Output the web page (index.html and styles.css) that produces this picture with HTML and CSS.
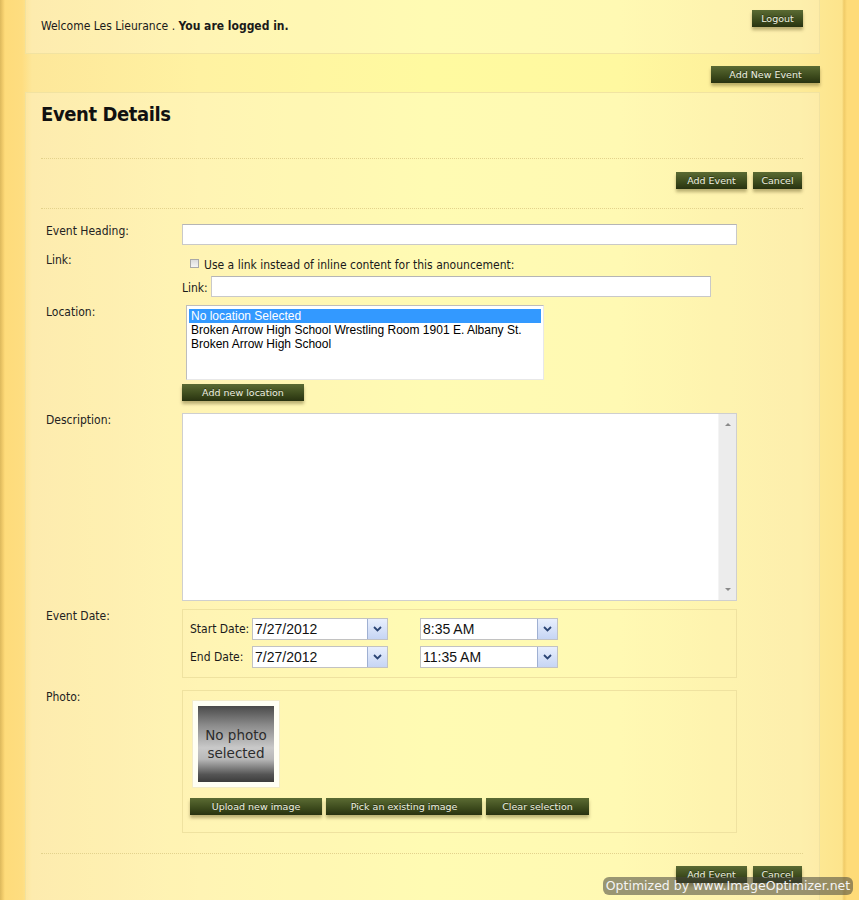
FILE: index.html
```html
<!DOCTYPE html>
<html lang="en">
<head>
    <meta charset="UTF-8">
    <title>Event Details</title>
    <link rel="stylesheet" href="styles.css">
</head>
<body>
    <div class="page">
        <div class="panel top-bar">
            <p class="welcome">Welcome Les Lieurance . <b>You are logged in.</b></p>
            <a class="btn btn-logout" href="#">Logout</a>
        </div>

        <div class="toolbar">
            <a class="btn btn-new" href="#">Add New Event</a>
        </div>

        <div class="panel main">
            <h1>Event Details</h1>

            <div class="actions">
                <a class="btn btn-add" href="#">Add Event</a>
                <a class="btn btn-cancel" href="#">Cancel</a>
            </div>

            <div class="form">
                <div class="row">
                    <div class="label">Event Heading:</div>
                    <div class="field"><input class="text wide" type="text"></div>
                </div>

                <div class="row">
                    <div class="label">Link:</div>
                    <div class="field">
                        <div class="check-line">
                            <input class="check" type="checkbox">
                            <span>Use a link instead of inline content for this anouncement:</span>
                        </div>
                        <div class="link-line">
                            <span class="link-label">Link:</span>
                            <input class="text link" type="text">
                        </div>
                    </div>
                </div>

                <div class="row loose">
                    <div class="label">Location:</div>
                    <div class="field">
                        <ul class="listbox">
                            <li class="selected">No location Selected</li>
                            <li>Broken Arrow High School Wrestling Room 1901 E. Albany St.</li>
                            <li>Broken Arrow High School</li>
                        </ul>
                        <a class="btn btn-location" href="#">Add new location</a>
                    </div>
                </div>

                <div class="row">
                    <div class="label">Description:</div>
                    <div class="field">
                        <div class="desc">
                            <textarea></textarea>
                            <div class="scroll">
                                <span class="arrow up"></span>
                                <span class="arrow down"></span>
                            </div>
                        </div>
                    </div>
                </div>

                <div class="row loose">
                    <div class="label">Event Date:</div>
                    <div class="field">
                        <div class="date-box">
                            <div class="date-row">
                                <span class="date-label">Start Date:</span>
                                <div class="combo"><span class="value">7/27/2012</span><span class="combo-btn"><svg width="9" height="6" viewBox="0 0 9 6"><path d="M1 1 L4.5 4.5 L8 1" fill="none" stroke="#2b4575" stroke-width="1.8"/></svg></span></div>
                                <div class="combo time"><span class="value">8:35 AM</span><span class="combo-btn"><svg width="9" height="6" viewBox="0 0 9 6"><path d="M1 1 L4.5 4.5 L8 1" fill="none" stroke="#2b4575" stroke-width="1.8"/></svg></span></div>
                            </div>
                            <div class="date-row">
                                <span class="date-label">End Date:</span>
                                <div class="combo"><span class="value">7/27/2012</span><span class="combo-btn"><svg width="9" height="6" viewBox="0 0 9 6"><path d="M1 1 L4.5 4.5 L8 1" fill="none" stroke="#2b4575" stroke-width="1.8"/></svg></span></div>
                                <div class="combo time"><span class="value">11:35 AM</span><span class="combo-btn"><svg width="9" height="6" viewBox="0 0 9 6"><path d="M1 1 L4.5 4.5 L8 1" fill="none" stroke="#2b4575" stroke-width="1.8"/></svg></span></div>
                            </div>
                        </div>
                    </div>
                </div>

                <div class="row">
                    <div class="label">Photo:</div>
                    <div class="field">
                        <div class="photo-box">
                            <div class="thumb">
                                <div class="no-photo">No photo<br>selected</div>
                            </div>
                            <div class="photo-actions">
                                <a class="btn btn-upload" href="#">Upload new image</a>
                                <a class="btn btn-pick" href="#">Pick an existing image</a>
                                <a class="btn btn-clear" href="#">Clear selection</a>
                            </div>
                        </div>
                    </div>
                </div>
            </div>

            <div class="actions bottom">
                <a class="btn btn-add" href="#">Add Event</a>
                <a class="btn btn-cancel" href="#">Cancel</a>
            </div>
        </div>
    </div>

    <div class="watermark">Optimized by www.ImageOptimizer.net</div>
</body>
</html>
```

FILE: styles.css
```css
body {
    margin: 0;
    min-height: 900px;
    position: relative;
    font-family: "DejaVu Sans Condensed", "DejaVu Sans", sans-serif;
    font-stretch: condensed;
    font-size: 12px;
    color: #1a1a1a;
    background: linear-gradient(to right, #dcb85c 0, #f3cd6c 3px, #fedb7a 5px, #fedd80 22px, #fde79a 32px, #fff2a2 200px, #fffaa0 430px, #fff8a0 620px, #fdeb98 800px, #fde48c 842px, #f0cb68 844px, #fedb78 847px, #fedb78 859px);
}
.page {
    margin-left: 25px;
    width: 795px;
}
.panel {
    background-color: rgba(255, 255, 255, 0.2);
    border: 1px solid rgba(240, 225, 160, 0.9);
    border-top: 0;
}
.top-bar {
    box-sizing: border-box;
    height: 54px;
    padding: 0 16px 0 15px;
    display: flex;
    justify-content: space-between;
    align-items: flex-start;
}
.welcome {
    margin: 0;
    padding-top: 19px;
    line-height: 15px;
}
.btn {
    display: inline-block;
    box-sizing: border-box;
    height: 17px;
    line-height: 17px;
    text-align: center;
    font-family: "DejaVu Sans", sans-serif;
    font-stretch: normal;
    font-size: 9.5px;
    color: #eef0e0;
    text-decoration: none;
    background: linear-gradient(#5b6b33, #3c4a1c 60%, #283210);
    box-shadow: 0 3px 3px rgba(60, 50, 0, 0.35);
    text-shadow: 0 -1px 0 rgba(0, 0, 0, 0.4);
}
.btn-logout {
    width: 51px;
    margin-top: 10px;
}
.toolbar {
    height: 38px;
    padding-top: 12px;
    box-sizing: border-box;
    text-align: right;
}
.btn-new {
    width: 109px;
}
.main {
    border-top: 1px solid rgba(240, 225, 160, 0.9);
    padding: 0 16px 60px 15px;
}
.main h1 {
    margin: 0;
    padding: 9px 0 32px;
    font-size: 20px;
    line-height: 24px;
    font-weight: bold;
    letter-spacing: -0.4px;
    color: #111;
    border-bottom: 1px dotted #e3d28c;
}
.actions {
    display: flex;
    justify-content: flex-end;
    gap: 6px;
    padding: 13px 1px 19px 0;
    border-bottom: 1px dotted #e3d28c;
}
.actions.bottom {
    border-bottom: 0;
    padding-top: 12px;
}
.btn-add {
    width: 71px;
}
.btn-cancel {
    width: 49px;
}
.form {
    padding: 15px 0 20px 5px;
    border-bottom: 1px dotted #e3d28c;
}
.row {
    display: flex;
    margin-bottom: 8px;
}
.row:last-child {
    margin-bottom: 0;
}
.row.loose {
    margin-bottom: 12px;
}
.label {
    width: 136px;
    flex-shrink: 0;
    line-height: 15px;
    color: #222;
}
.field {
    width: 555px;
}
.text {
    box-sizing: border-box;
    height: 21px;
    margin: 0;
    border: 1px solid #c9c9c9;
    border-top-color: #b5b5b5;
    background: #fff;
    font-family: "Liberation Sans", Arial, sans-serif;
}
.text.wide {
    display: block;
    width: 555px;
}
.check-line {
    height: 23px;
    display: flex;
    align-items: center;
    padding-left: 8px;
    padding-top: 1px;
    box-sizing: border-box;
}
.check {
    appearance: none;
    width: 9px;
    height: 9px;
    margin: 0 5px 4px 0;
    border: 1px solid #a8a8a8;
    background: linear-gradient(#dcdcdc, #f4f4f4);
}
.check-line span {
    line-height: 15px;
}
.link-line {
    display: flex;
    align-items: center;
}
.link-label {
    width: 29px;
    padding-top: 2px;
}
.text.link {
    width: 500px;
}
.listbox {
    list-style: none;
    margin: 0 0 0 4px;
    padding: 3px 2px;
    box-sizing: border-box;
    width: 358px;
    height: 75px;
    background: #fff;
    border: 1px solid #bdbdbd;
    border-right-color: #e8e8e8;
    border-bottom-color: #e8e8e8;
    font-family: "Liberation Sans", Arial, sans-serif;
    font-stretch: normal;
    font-size: 12px;
    color: #000;
}
.listbox li {
    line-height: 14px;
    padding-left: 2px;
}
.listbox li.selected {
    background: #3399ff;
    color: #fff;
}
.btn-location {
    width: 122px;
    margin-top: 4px;
}
.desc {
    display: flex;
    box-sizing: border-box;
    width: 555px;
    height: 188px;
    border: 1px solid #cfcfcf;
    background: #fff;
}
.desc textarea {
    flex: 1;
    border: 0;
    margin: 0;
    resize: none;
    outline: none;
    background: #fff;
}
.scroll {
    width: 17px;
    background: #ececec;
    border-left: 1px solid #f4f4f4;
    position: relative;
}
.arrow {
    position: absolute;
    left: 6px;
    width: 0;
    height: 0;
    border-left: 3px solid transparent;
    border-right: 3px solid transparent;
}
.arrow.up {
    top: 9px;
    border-bottom: 3px solid #8a8a8a;
}
.arrow.down {
    bottom: 9px;
    border-top: 3px solid #8a8a8a;
}
.date-box {
    box-sizing: border-box;
    width: 555px;
    height: 69px;
    padding: 8px 7px 0;
    border: 1px solid #efe2a0;
}
.date-row {
    display: flex;
    align-items: center;
    margin-bottom: 6px;
}
.date-label {
    width: 62px;
}
.combo {
    box-sizing: border-box;
    display: flex;
    width: 136px;
    height: 22px;
    border: 1px solid #c2c2c2;
    background: #fff;
    font-family: "Liberation Sans", Arial, sans-serif;
    font-stretch: normal;
    font-size: 14px;
    color: #111;
}
.combo.time {
    width: 138px;
    margin-left: 32px;
}
.combo .value {
    flex: 1;
    line-height: 20px;
    padding-left: 2px;
}
.combo-btn {
    width: 19px;
    display: flex;
    align-items: center;
    justify-content: center;
    background: linear-gradient(#e8effd, #c6d5f4);
    border-left: 1px solid #9fb0d2;
}
.photo-box {
    box-sizing: border-box;
    width: 555px;
    height: 143px;
    padding: 9px 7px 0;
    border: 1px solid #efe2a0;
}
.thumb {
    width: 88px;
    height: 88px;
    box-sizing: border-box;
    margin-left: 2px;
    padding: 6px;
    background: #fffff4;
    border: 1px solid #f3ecc8;
}
.no-photo {
    width: 76px;
    height: 76px;
    margin: -1px;
    display: flex;
    align-items: center;
    justify-content: center;
    text-align: center;
    font-family: "DejaVu Sans", sans-serif;
    font-stretch: normal;
    font-size: 13.5px;
    line-height: 18px;
    color: #2c2c2c;
    background: linear-gradient(#4a4a4a, #8a8a8a 25%, #c9c9c9 55%, #b8b8b8 70%, #555 90%, #3c3c3c);
}
.photo-actions {
    display: flex;
    gap: 4px;
    margin-top: 10px;
}
.btn-upload {
    width: 132px;
}
.btn-pick {
    width: 156px;
}
.btn-clear {
    width: 103px;
}
.watermark {
    position: absolute;
    left: 603px;
    top: 877px;
    width: 250px;
    height: 18px;
    line-height: 18px;
    text-align: center;
    border-radius: 6px;
    background: rgba(70, 70, 60, 0.55);
    color: #f4f4f4;
    font-family: "DejaVu Sans", sans-serif;
    font-stretch: normal;
    font-size: 12.5px;
    white-space: nowrap;
}
```
